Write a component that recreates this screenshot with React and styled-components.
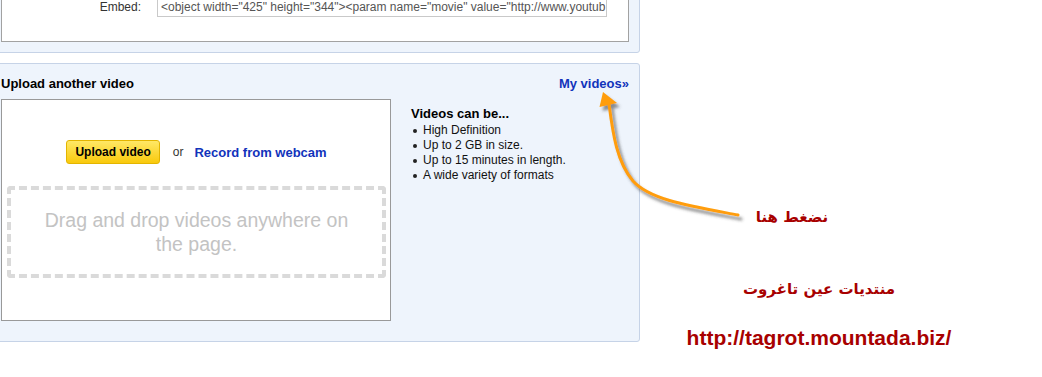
import React from "react";
import styled, { createGlobalStyle } from "styled-components";

const Global = createGlobalStyle`
  html, body { margin: 0; padding: 0; background: #fff; }
  body { font-family: "Liberation Sans", Arial, sans-serif; color: #000; overflow: hidden; }
`;

const Page = styled.div`
  position: relative;
  width: 1042px;
  height: 377px;
  display: flex;
  align-items: flex-start;
`;

const LeftCol = styled.div`
  width: 650px;
  margin-left: -10px;
  flex: none;
`;

const Panel = styled.div`
  background: #eef4fc;
  border: 1px solid #c6d3e7;
  border-radius: 3px;
  padding: ${(p) => p.$pad};
  margin-top: ${(p) => p.$mt || "0"};
`;

const InnerBox = styled.div`
  background: #fff;
  border: 1px solid #a2a2a2;
  padding: 11px 0 24px;
`;

const FieldRow = styled.div`
  display: flex;
  align-items: center;
  height: 20px;
`;

const FieldLabel = styled.div`
  width: 155px;
  text-align: right;
  padding-right: 16px;
  font-size: 12px;
  color: #333;
  box-sizing: border-box;
`;

const FieldInput = styled.div`
  width: 450px;
  height: 20px;
  box-sizing: border-box;
  border: 1px solid #c9c9c9;
  padding: 2px 3px;
  font-size: 12px;
  line-height: 14px;
  color: #555;
  white-space: nowrap;
  overflow: hidden;
`;

const PanelHead = styled.div`
  display: flex;
  justify-content: space-between;
  align-items: center;
  height: 16px;
  margin-bottom: 8px;
`;

const Title = styled.div`
  font-size: 13px;
  font-weight: bold;
  color: #000;
`;

const Link = styled.span`
  font-size: 13px;
  font-weight: bold;
  color: #1133bb;
`;

const Body = styled.div`
  display: flex;
  gap: 20px;
  align-items: flex-start;
`;

const DropArea = styled.div`
  width: 390px;
  height: 222px;
  box-sizing: border-box;
  background: #fff;
  border: 1px solid #999;
  padding: 40px 4px 0 5px;
`;

const ActionRow = styled.div`
  display: flex;
  align-items: center;
  justify-content: center;
  height: 24px;
  font-size: 13px;
`;

const YellowButton = styled.div`
  height: 24px;
  box-sizing: border-box;
  padding: 0 8px;
  display: flex;
  align-items: center;
  font-size: 12px;
  font-weight: bold;
  color: #000;
  border: 1px solid #e3b500;
  border-radius: 3px;
  background: linear-gradient(#ffe866, #f9c90c);
`;

const Or = styled.span`
  margin: 0 11px 0 13px;
  color: #333;
  font-size: 12px;
`;

const Dashed = styled.div`
  margin-top: 22px;
  height: 92px;
  box-sizing: border-box;
  border: 4px dashed #dadada;
  border-radius: 4px;
  padding: 18px 22px;
  text-align: center;
  font-size: 19.5px;
  line-height: 24px;
  color: #c3c3c3;
`;

const InfoCol = styled.div`
  padding-top: 7px;
`;

const InfoTitle = styled.div`
  font-size: 13px;
  font-weight: bold;
  line-height: 16px;
  margin-bottom: 1px;
`;

const List = styled.ul`
  list-style: none;
  margin: 0;
  padding: 0;
`;

const Item = styled.li`
  position: relative;
  padding-left: 12px;
  font-size: 12px;
  line-height: 15px;
  color: #111;
  &::before {
    content: "";
    position: absolute;
    left: 2px;
    top: 6px;
    width: 4px;
    height: 4px;
    border-radius: 50%;
    background: #222;
  }
`;

const RightCol = styled.div`
  width: 358px;
  flex: none;
  padding-top: 205px;
  display: flex;
  flex-direction: column;
  align-items: center;
`;

const Note = styled.div`
  font-family: ${(p) => (p.$ar ? '"DejaVu Sans", "Liberation Sans", sans-serif' : '"Liberation Sans", Arial, sans-serif')};
  font-size: ${(p) => p.$size};
  font-weight: bold;
  line-height: 24px;
  color: #a80000;
  margin-top: ${(p) => p.$mt || "0"};
  margin-right: ${(p) => p.$shift || "0"};
  direction: ${(p) => (p.$ar ? "rtl" : "ltr")};
`;

const ArrowLayer = styled.svg`
  position: absolute;
  left: 0;
  top: 0;
  pointer-events: none;
`;

export default function App() {
  return (
    <>
      <Global />
      <Page>
        <LeftCol>
          <Panel $pad="10px 10px 10px" $mt="-26px">
            <InnerBox>
              <FieldRow>
                <FieldLabel>Embed:</FieldLabel>
                <FieldInput>
                  {'<object width="425" height="344"><param name="movie" value="http://www.youtub'}
                </FieldInput>
              </FieldRow>
            </InnerBox>
          </Panel>
          <Panel $pad="11px 10px 20px" $mt="10px">
            <PanelHead>
              <Title>Upload another video</Title>
              <Link>My videos»</Link>
            </PanelHead>
            <Body>
              <DropArea>
                <ActionRow>
                  <YellowButton>Upload video</YellowButton>
                  <Or>or</Or>
                  <Link>Record from webcam</Link>
                </ActionRow>
                <Dashed>Drag and drop videos anywhere on the page.</Dashed>
              </DropArea>
              <InfoCol>
                <InfoTitle>Videos can be...</InfoTitle>
                <List>
                  <Item>High Definition</Item>
                  <Item>Up to 2 GB in size.</Item>
                  <Item>Up to 15 minutes in length.</Item>
                  <Item>A wide variety of formats</Item>
                </List>
              </InfoCol>
            </Body>
          </Panel>
        </LeftCol>
        <RightCol>
          <Note $ar $size="15px" $shift="54px">نضغط هنا</Note>
          <Note $ar $size="15px" $mt="48px">منتديات عين تاغروت</Note>
          <Note $size="21px" $mt="25px">http://tagrot.mountada.biz/</Note>
        </RightCol>
        <ArrowLayer width="1042" height="377" viewBox="0 0 1042 377">
          <defs>
            <filter id="sh" x="-20%" y="-20%" width="140%" height="140%">
              <feDropShadow dx="3" dy="4" stdDeviation="1.8" floodColor="#444" floodOpacity="0.6" />
            </filter>
          </defs>
          <g filter="url(#sh)">
            <path
              d="M738 215 C 690 206, 650 200, 633 181 C 617 162, 613 135, 609 104"
              fill="none"
              stroke="#ff9d0a"
              strokeWidth="3"
              strokeLinecap="round"
            />
            <polygon points="603,92 599.5,107 617,103" fill="#ff9d0a" />
          </g>
        </ArrowLayer>
      </Page>
    </>
  );
}
